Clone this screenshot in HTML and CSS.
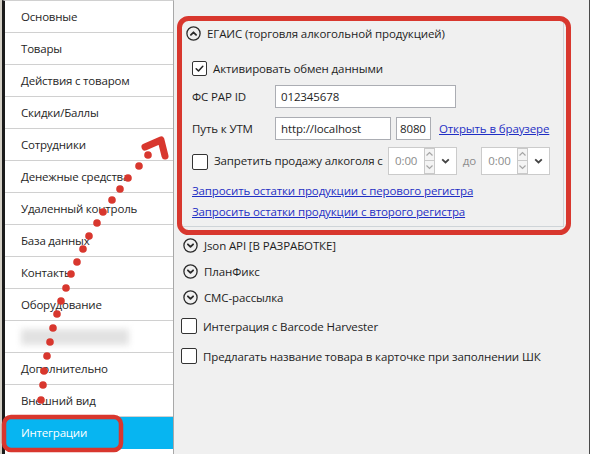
FILE: index.html
```html
<!DOCTYPE html>
<html lang="ru">
<head>
  <meta charset="UTF-8">
  <title>Настройки — Интеграции</title>
  <link rel="stylesheet" href="styles.css">
</head>
<body>
  <div class="window">
    <div class="edge"></div>

    <ul class="menu">
      <li>Основные</li>
      <li>Товары</li>
      <li>Действия с товаром</li>
      <li>Скидки/Баллы</li>
      <li>Сотрудники</li>
      <li>Денежные средства</li>
      <li>Удаленный контроль</li>
      <li>База данных</li>
      <li>Контакты</li>
      <li>Оборудование</li>
      <li class="hidden-item"><span class="blur"></span></li>
      <li>Дополнительно</li>
      <li>Внешний вид</li>
      <li class="active">Интеграции</li>
    </ul>

    <main class="content">
      <div class="group">
        <div class="exp-head">
          <svg class="exp-btn" width="15" height="15" viewBox="0 0 15 15"><circle cx="7.5" cy="7.5" r="6.6" fill="none" stroke="#2b2b2b" stroke-width="1.3"/><path d="M4.9 8.9 L7.5 6.3 L10.1 8.9" fill="none" stroke="#2b2b2b" stroke-width="1.8" stroke-linecap="round" stroke-linejoin="round"/></svg>
          ЕГАИС (торговля алкогольной продукцией)
        </div>
        <div class="group-body">
          <div class="check-row first">
            <span class="check"><svg width="13" height="13" viewBox="0 0 13 13"><path d="M3.2 6.8 L5.5 9 L9.8 4.3" fill="none" stroke="#222" stroke-width="1.5" stroke-linecap="round" stroke-linejoin="round"/></svg></span>
            Активировать обмен данными
          </div>

          <div class="field-row">
            <span class="field-label">ФС РАР ID</span>
            <span class="textbox id-box">012345678</span>
          </div>

          <div class="field-row">
            <span class="field-label">Путь к УТМ</span>
            <span class="textbox url-box">http://localhost</span>
            <span class="textbox port-box">8080</span>
            <a class="link" href="#">Открыть в браузере</a>
          </div>

          <div class="forbid-row">
            <span class="check"></span>
            <span>Запретить продажу алкоголя с</span>
            <div class="timepicker">
              <span class="tp-text">0:00</span>
              <span class="tp-spin">
                <span class="tp-btn"><svg width="9" height="6" viewBox="0 0 9 6"><path d="M1.5 4.5 L4.5 1.5 L7.5 4.5" fill="none" stroke="#a6a6a6" stroke-width="1.2"/></svg></span>
                <span class="tp-btn"><svg width="9" height="6" viewBox="0 0 9 6"><path d="M1.5 1.5 L4.5 4.5 L7.5 1.5" fill="none" stroke="#a6a6a6" stroke-width="1.2"/></svg></span>
              </span>
              <span class="tp-drop"><svg width="9" height="6" viewBox="0 0 9 6"><path d="M1.2 1.3 L4.5 4.5 L7.8 1.3" fill="none" stroke="#444" stroke-width="1.8"/></svg></span>
            </div>
            <span class="to">до</span>
            <div class="timepicker">
              <span class="tp-text">0:00</span>
              <span class="tp-spin">
                <span class="tp-btn"><svg width="9" height="6" viewBox="0 0 9 6"><path d="M1.5 4.5 L4.5 1.5 L7.5 4.5" fill="none" stroke="#a6a6a6" stroke-width="1.2"/></svg></span>
                <span class="tp-btn"><svg width="9" height="6" viewBox="0 0 9 6"><path d="M1.5 1.5 L4.5 4.5 L7.5 1.5" fill="none" stroke="#a6a6a6" stroke-width="1.2"/></svg></span>
              </span>
              <span class="tp-drop"><svg width="9" height="6" viewBox="0 0 9 6"><path d="M1.2 1.3 L4.5 4.5 L7.8 1.3" fill="none" stroke="#444" stroke-width="1.8"/></svg></span>
            </div>
          </div>

          <a class="link block first-link" href="#">Запросить остатки продукции с перового регистра</a>
          <a class="link block" href="#">Запросить остатки продукции с второго регистра</a>
        </div>
      </div>

      <div class="exp-head closed first-closed">
        <svg class="exp-btn" width="15" height="15" viewBox="0 0 15 15"><circle cx="7.5" cy="7.5" r="6.6" fill="none" stroke="#2b2b2b" stroke-width="1.3"/><path d="M4.9 6.3 L7.5 8.9 L10.1 6.3" fill="none" stroke="#2b2b2b" stroke-width="1.8" stroke-linecap="round" stroke-linejoin="round"/></svg>
        Json API [В РАЗРАБОТКЕ]
      </div>
      <div class="exp-head closed">
        <svg class="exp-btn" width="15" height="15" viewBox="0 0 15 15"><circle cx="7.5" cy="7.5" r="6.6" fill="none" stroke="#2b2b2b" stroke-width="1.3"/><path d="M4.9 6.3 L7.5 8.9 L10.1 6.3" fill="none" stroke="#2b2b2b" stroke-width="1.8" stroke-linecap="round" stroke-linejoin="round"/></svg>
        ПланФикс
      </div>
      <div class="exp-head closed">
        <svg class="exp-btn" width="15" height="15" viewBox="0 0 15 15"><circle cx="7.5" cy="7.5" r="6.6" fill="none" stroke="#2b2b2b" stroke-width="1.3"/><path d="M4.9 6.3 L7.5 8.9 L10.1 6.3" fill="none" stroke="#2b2b2b" stroke-width="1.8" stroke-linecap="round" stroke-linejoin="round"/></svg>
        СМС-рассылка
      </div>

      <div class="check-row outer barcode">
        <span class="check"></span>
        Интеграция с Barcode Harvester
      </div>
      <div class="check-row outer suggest">
        <span class="check"></span>
        Предлагать название товара в карточке при заполнении ШК
      </div>
    </main>

    <!-- пометки поверх скриншота -->
    <svg class="marks" width="590" height="454" viewBox="0 0 590 454">
      <rect x="179.5" y="18.5" width="389" height="214" rx="9" fill="none" stroke="#d8372e" stroke-width="5"/>
      <rect x="4" y="417" width="117" height="33" rx="7" fill="none" stroke="#d8372e" stroke-width="4.5"/>
      <path d="M145 147 L161 140 L165 156" fill="none" stroke="#d8372e" stroke-width="7" stroke-linecap="round" stroke-linejoin="round"/>
      <g fill="#d8372e">
        <circle cx="148" cy="155" r="3.8"/>
        <circle cx="139" cy="166" r="3.8"/>
        <circle cx="128" cy="178" r="3.8"/>
        <circle cx="120" cy="189" r="3.8"/>
        <circle cx="112" cy="200" r="3.8"/>
        <circle cx="103" cy="212" r="3.8"/>
        <circle cx="97" cy="223" r="3.8"/>
        <circle cx="89" cy="236" r="3.8"/>
        <circle cx="83" cy="249" r="3.8"/>
        <circle cx="77" cy="262" r="3.8"/>
        <circle cx="71" cy="274" r="3.8"/>
        <circle cx="66" cy="288" r="3.8"/>
        <circle cx="61" cy="301" r="3.8"/>
        <circle cx="57" cy="314" r="3.8"/>
        <circle cx="53" cy="328" r="3.8"/>
        <circle cx="50" cy="342" r="3.8"/>
        <circle cx="47" cy="356" r="3.8"/>
        <circle cx="44" cy="371" r="3.8"/>
        <circle cx="43" cy="385" r="3.8"/>
        <circle cx="41" cy="400" r="3.8"/>
      </g>
    </svg>
  </div>
</body>
</html>
```

FILE: styles.css
```css
body {
  margin: 0;
  font-family: "Open Sans", "Noto Sans", sans-serif;
  font-size: 11.5px;
  letter-spacing: -0.12px;
  color: #1e1e1e;
  background-color: #f0f0f0;
}

.window {
  position: relative;
  display: flex;
  width: 590px;
  height: 454px;
  box-sizing: border-box;
  border-right: 1px solid #4a4a4a;
  overflow: hidden;
}

.edge {
  width: 2px;
  background-color: #d4d0c6;
}

/* левое меню */
.menu {
  list-style: none;
  margin: 0;
  padding: 0;
  width: 168px;
  background-color: #fff;
  border-left: 3px solid #1b1b1b;
  border-right: 1px solid #a8a8a8;
  border-top: 1px solid #d0d0d0;
}

.menu li {
  height: 31px;
  line-height: 32px;
  padding-left: 16px;
  border-bottom: 1px solid #d0d0d0;
  color: #262626;
  letter-spacing: -0.2px;
}

.menu li.active {
  background-color: #07b5f1;
  color: #fff;
  border-bottom-color: #07b5f1;
}

.hidden-item {
  display: flex;
  align-items: center;
}

.blur {
  display: block;
  width: 108px;
  height: 16px;
  background-color: #e2e2e2;
  filter: blur(3px);
}

/* правая часть */
.content {
  flex: 1;
  padding: 20px 25px 0 7px;
}

.group {
  border: 1px solid #cfd4d8;
}

.exp-head {
  display: flex;
  align-items: center;
  height: 24px;
  padding-left: 4px;
  white-space: nowrap;
}

.exp-btn {
  margin-right: 6px;
  flex-shrink: 0;
}

.exp-head.closed {
  height: 26px;
  padding-left: 2px;
}

.exp-head.first-closed {
  margin-top: 5px;
}

.group-body {
  padding: 0 0 6px 10px;
}

.check-row {
  display: flex;
  align-items: center;
  height: 16px;
  white-space: nowrap;
}

.check-row.first {
  margin-top: 15px;
}

.check {
  display: inline-flex;
  align-items: center;
  justify-content: center;
  width: 13px;
  height: 13px;
  border: 1px solid #333;
  border-radius: 2px;
  background-color: #fff;
  margin-right: 6px;
  flex-shrink: 0;
}

.field-row {
  display: flex;
  align-items: center;
  height: 23px;
  margin-top: 9px;
  white-space: nowrap;
}

.field-label {
  width: 83px;
}

.textbox {
  height: 21px;
  line-height: 21px;
  border: 1px solid #abadb3;
  background-color: #fff;
  padding-left: 5px;
  box-sizing: content-box;
}

.id-box {
  width: 174px;
}

.url-box {
  width: 109px;
}

.port-box {
  width: 30px;
  margin-left: 5px;
  padding-left: 3px;
}

.link {
  color: #1f2fc4;
  text-decoration: underline;
}

.field-row .link {
  margin-left: 8px;
}

.forbid-row {
  display: flex;
  align-items: center;
  height: 27px;
  margin-top: 7px;
  white-space: nowrap;
}

.forbid-row .check {
  width: 14px;
  height: 14px;
  margin-top: 2px;
}

.timepicker {
  display: flex;
  width: 67px;
  height: 26px;
  border: 1px solid #cbcbcb;
  background-color: #fff;
  margin-left: 5px;
  flex-shrink: 0;
}

.tp-text {
  width: 35px;
  line-height: 26px;
  text-align: center;
  color: #8c8c8c;
}

.tp-spin {
  display: flex;
  flex-direction: column;
  width: 11px;
}

.tp-btn {
  flex: 1;
  display: flex;
  align-items: center;
  justify-content: center;
  border: 1px solid #c9c9c9;
  background-color: #f4f4f4;
}

.tp-btn + .tp-btn {
  border-top: none;
}

.tp-drop {
  flex: 1;
  display: flex;
  align-items: center;
  justify-content: center;
}

.to {
  margin-left: 6px;
  color: #8c8c8c;
}

.link.block {
  display: block;
  line-height: 16px;
  margin-top: 5px;
  white-space: nowrap;
}

.link.first-link {
  margin-top: 9px;
}

.check-row.outer {
  height: 20px;
}

.check-row.outer .check {
  width: 14px;
  height: 14px;
}

.barcode {
  margin-top: 6px;
}

.suggest {
  margin-top: 10px;
}

.marks {
  position: absolute;
  top: 0;
  left: 0;
  pointer-events: none;
}
```
